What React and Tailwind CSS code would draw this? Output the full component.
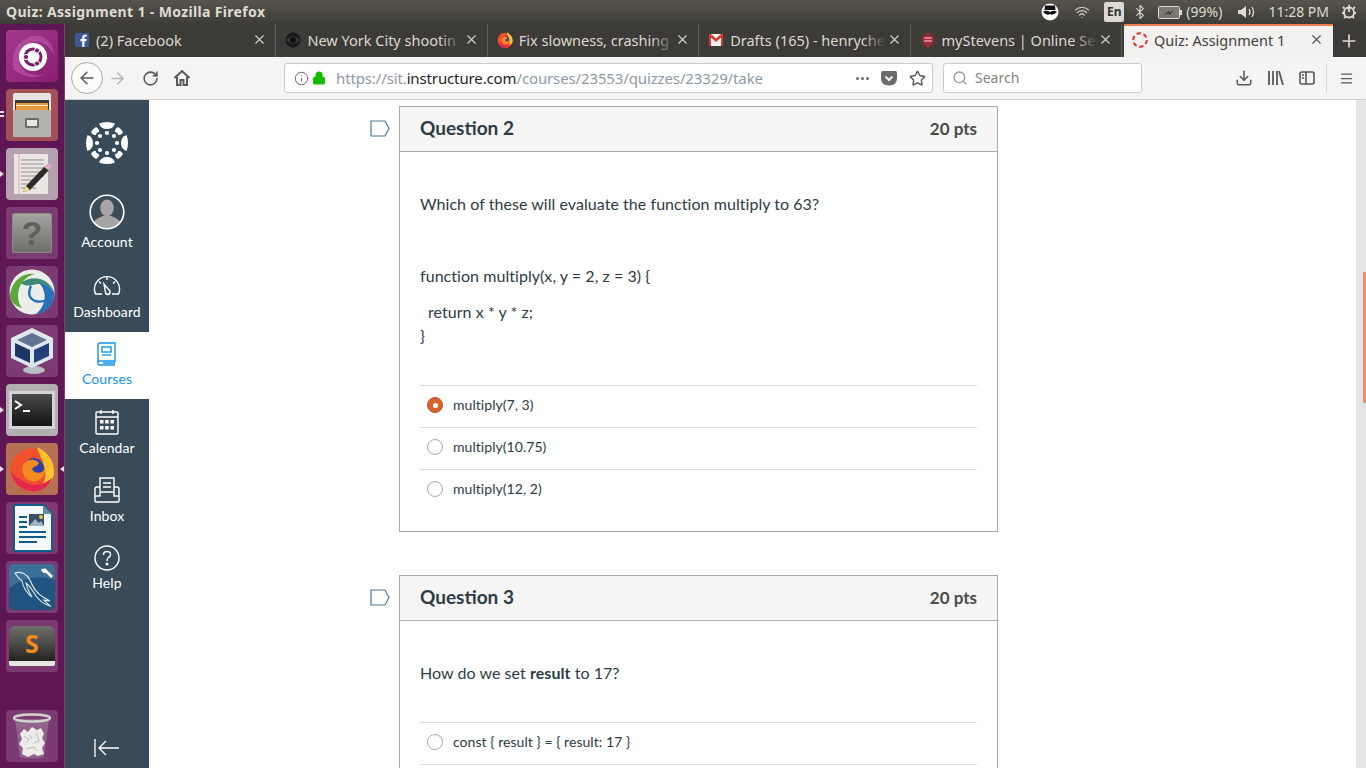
import React from 'react';
import {
  ArrowLeft, ArrowRight, RotateCw, Info, Lock, Star, Search, Download, Menu, X, Plus, Wifi, Bluetooth,
} from 'lucide-react';

// Launcher tiles, drawn by hand since no package has these app icons
const Tile = ({ tone, pip, pipRight, dashes, children }) => (
  <div className={`relative w-[52px] h-[52px] rounded-[4px] flex items-center justify-center shrink-0 ${tone}`}>
    {children}
    {pip && <div className="absolute left-[-6px] top-[23px] w-0 h-0 border-y-[3px] border-y-transparent border-l-[4px] border-l-[#e4dde2]" />}
    {pipRight && <div className="absolute right-[-6px] top-[23px] w-0 h-0 border-y-[3px] border-y-transparent border-r-[4px] border-r-[#e4dde2]" />}
    {dashes && (
      <div className="absolute left-[-6px] top-[22px] flex flex-col gap-[2px]">
        <div className="w-[4px] h-[2px] bg-[#e4dde2]" />
        <div className="w-[4px] h-[2px] bg-[#e4dde2]" />
      </div>
    )}
  </div>
);

const UbuntuLogo = () => (
  <svg width="52" height="52" viewBox="0 0 52 52">
    <path d="M8 40 Q2 14 26 6 Q46 4 48 26 Q44 12 28 12 Q12 16 14 36 Q22 48 40 44 Q24 52 8 40Z" fill="#c76db3" opacity="0.45" />
    <circle cx="27" cy="27" r="14" fill="#fff" />
    <circle cx="27" cy="27" r="8" fill="none" stroke="#77216f" strokeWidth="3" />
    <circle cx="20" cy="27" r="2.6" fill="#77216f" stroke="#fff" />
    <circle cx="31" cy="20.5" r="2.6" fill="#77216f" stroke="#fff" />
    <circle cx="31" cy="33.5" r="2.6" fill="#77216f" stroke="#fff" />
  </svg>
);

const FilesIcon = () => (
  <svg width="44" height="46" viewBox="0 0 44 46">
    <rect x="3" y="1" width="38" height="44" rx="2" fill="#e6e4e0" />
    <rect x="5" y="8" width="34" height="14" fill="#3f3a36" />
    <rect x="6" y="11" width="32" height="10" fill="#e89a3c" />
    <rect x="6" y="13" width="32" height="1" fill="#fff2cf" />
    <rect x="3" y="18" width="38" height="27" rx="1" fill="#b5b3ae" />
    <rect x="15" y="26" width="14" height="10" rx="1" fill="#6e6c68" />
    <rect x="17" y="28" width="10" height="6" fill="#e8e6e2" />
  </svg>
);

const EditorIcon = () => (
  <svg width="44" height="46" viewBox="0 0 44 46">
    <rect x="4" y="3" width="34" height="40" fill="#e9e6e3" />
    <line x1="9" y1="3" x2="9" y2="43" stroke="#e8a9a9" />
    {[9, 13, 17, 21, 25, 29, 33, 37].map((y) => (
      <line key={y} x1="11" y1={y} x2={y > 25 ? 26 : 34} y2={y} stroke="#8f8d8c" />
    ))}
    <path d="M16 35 L35 15 L39 19 L20 39 L13 41 Z" fill="#2e2b2a" />
    <path d="M34 16 L37 13 Q39 12 41 14 Q42 16 40 18 L38.5 19.5 Z" fill="#e8a3c8" />
    <path d="M16 35 L20 39 L13 41 Z" fill="#f2e28f" />
  </svg>
);

const HelpTileIcon = () => (
  <div className="w-10 h-10 rounded-[2px] bg-gradient-to-b from-[#a3a3a0] to-[#6f6f6c] border border-[#8a8a87] flex items-center justify-center font-['Liberation_Sans',sans-serif] font-bold text-[34px] text-[#5f5f5d]">
    ?
  </div>
);

const AnyConnectIcon = () => (
  <svg width="46" height="46" viewBox="0 0 46 46">
    <circle cx="23" cy="23" r="22.5" fill="#eceeec" />
    <path d="M1 27 C2 14 12 3 26 5 C17 7 9 15 9 27 C9 33 11 36 13 39 C6 37 2 33 1 27Z" fill="#5ba73a" />
    <path d="M12 14 C22 6 38 8 45 22 C38 15 30 14 24 16 C20 17 15 17 12 14Z" fill="#3f8a76" />
    <path d="M30 14 C38 22 38 36 27 45 C37 45 46 34 45 23 C42 18 36 15 30 14Z" fill="#2671b8" />
    <path d="M22 17 Q17 28 26 32 Q34 34 40 30" fill="none" stroke="#2671b8" strokeWidth="2.4" />
  </svg>
);

const VirtualBoxIcon = () => (
  <svg width="46" height="48" viewBox="0 0 46 48">
    <ellipse cx="25" cy="43" rx="11" ry="4" fill="#b9bcc2" />
    <path d="M23 1 L44 11 L44 31 L23 41 L2 31 L2 11 Z" fill="#dfe6ee" />
    <path d="M23 6 L38 13 L23 20 L8 13 Z" fill="#64748f" />
    <path d="M6 16 L21 23 L21 36 L6 29 Z" fill="#1f3566" />
    <path d="M40 16 L25 23 L25 36 L40 29 Z" fill="#23407a" />
  </svg>
);

const TerminalIcon = () => (
  <div className="w-[46px] h-[38px] bg-gradient-to-b from-[#4a4a4a] to-[#141414] border-[3px] border-[#d4d4d4] flex items-start pl-[2px] pt-[6px]">
    <svg width="20" height="14" viewBox="0 0 20 14">
      <path d="M1 1 L7 5 L1 9" fill="none" stroke="#fff" strokeWidth="2" />
      <path d="M9 11 L16 11" stroke="#fff" strokeWidth="2" />
    </svg>
  </div>
);

const FirefoxIcon = ({ size = 46 }) => (
  <svg width={size} height={size} viewBox="0 0 46 46">
    <circle cx="23" cy="24" r="21.5" fill="#f2502c" />
    <path d="M28 1 C41 7 46 18 45 28 C43 38 34 45 24 45.5 C35 40 38 32 36 24 C35 16 30 9 28 1Z" fill="#ffc22f" />
    <path d="M2 26 C4 37 14 45.5 25 45.5 C34 45 41 39 43 32 C36 38 26 41 18 37 C10 33 5 30 2 26Z" fill="#e3274d" />
    <circle cx="25" cy="22" r="10" fill="#2f3fa8" />
    <path d="M14 19 C18 13 26 12 30 17 C28 21 25 20 23 23 C26 29 34 27 36 23 C37 31 29 37 22 35 C15 33 12 26 14 19Z" fill="#f58a21" />
  </svg>
);

const WriterIcon = () => (
  <svg width="42" height="48" viewBox="0 0 42 48">
    <path d="M3 1 H32 L41 10 V47 H3 Z" fill="#f5f8fa" stroke="#0f5d8a" strokeWidth="2" />
    <path d="M32 1 L41 10 H32 Z" fill="#5e8eaa" />
    <rect x="8" y="12" width="8" height="2" fill="#0f5d8a" />
    <rect x="8" y="17" width="8" height="2" fill="#0f5d8a" />
    <rect x="8" y="22" width="8" height="2" fill="#0f5d8a" />
    <rect x="18" y="10" width="15" height="12" fill="#38506a" />
    <path d="M18 22 L24 15 L28 19 L30 17 L33 22 Z" fill="#9fb3c6" />
    <circle cx="30" cy="13" r="2" fill="#f0c23a" />
    <rect x="8" y="27" width="27" height="2" fill="#0f5d8a" />
    <rect x="8" y="32" width="27" height="2" fill="#0f5d8a" />
    <rect x="8" y="37" width="18" height="2" fill="#0f5d8a" />
  </svg>
);

const MysqlIcon = () => (
  <svg width="46" height="46" viewBox="0 0 46 46">
    <rect width="46" height="46" rx="5" fill="#1f5580" />
    <path d="M0 5 Q0 0 5 0 H41 Q46 0 46 5 V16 Q22 8 0 24Z" fill="#3a7098" />
    <path d="M6 9 C12 7 18 10 21 16 C24 24 29 30 34 33 L41 37 L35 36 L41 42 C34 40 30 36 27 32 C24 27 21 22 17 19 C18 24 20 28 23 33 C18 29 14 24 13 17 C11 15 8 13 6 9Z" fill="none" stroke="#dfe9f0" strokeWidth="1.1" />
    <path d="M35 5 L43 13 M33 5 Q35 9 38 7" stroke="#fff" strokeWidth="2.6" fill="none" />
  </svg>
);

const SublimeIcon = () => (
  <div className="w-[46px] h-[40px] rounded-t-[6px] rounded-b-[2px] border-b-[5px] border-[#e6e6e2] bg-gradient-to-b from-[#6e6e6b] via-[#4c4c4a] to-[#222221] flex items-center justify-center font-['Noto_Sans',sans-serif] font-bold text-[25px] leading-none text-[#f58a1f]">
    S
  </div>
);

const TrashIcon = () => (
  <svg width="40" height="48" viewBox="0 0 40 48">
    <path d="M3 7 L8 45 Q20 48 32 45 L37 7 Z" fill="#a88aa3" opacity="0.5" />
    <ellipse cx="20" cy="6" rx="18" ry="3.5" fill="none" stroke="#d2d2cf" strokeWidth="2.4" />
    <path d="M8 22 L12 17 L16 20 L20 15 L25 18 L29 16 L32 22 L30 26 L33 31 L30 36 L32 42 L26 44 L22 42 L16 45 L10 42 L11 36 L7 32 L10 27Z" fill="#eeecea" />
    <path d="M12 24 L17 27 L14 31 M24 21 L27 29 L22 31 M14 37 L22 35 L25 39 M18 23 L20 27" fill="none" stroke="#bdbab8" />
  </svg>
);

const Launcher = () => (
  <aside className="w-[65px] shrink-0 bg-[#5f1655] border-r border-[#7d3f74] flex flex-col items-start pl-[6px] pt-[6px] pb-[6px] gap-[7px]">
    <Tile tone="bg-gradient-to-br from-[#a23a8c] to-[#8b1b74]"><UbuntuLogo /></Tile>
    <Tile tone="bg-[#a05258]" dashes><FilesIcon /></Tile>
    <Tile tone="bg-[#b5a2b0]" pip><EditorIcon /></Tile>
    <Tile tone="bg-[#7b3a72]"><HelpTileIcon /></Tile>
    <Tile tone="bg-[#7b3a72]"><AnyConnectIcon /></Tile>
    <Tile tone="bg-[#7b3a72]"><VirtualBoxIcon /></Tile>
    <Tile tone="bg-[#b3aeb0]" pip><TerminalIcon /></Tile>
    <Tile tone="bg-[#b56f52]" pip pipRight><FirefoxIcon /></Tile>
    <Tile tone="bg-[#7b3a72]"><WriterIcon /></Tile>
    <Tile tone="bg-[#7b3a72]"><MysqlIcon /></Tile>
    <Tile tone="bg-[#7b3a72]"><SublimeIcon /></Tile>
    <div className="mt-auto">
      <Tile tone="bg-[#7b3a72]"><TrashIcon /></Tile>
    </div>
  </aside>
);

// Top panel
const TopPanel = () => (
  <div className="h-6 shrink-0 bg-gradient-to-b from-[#57544c] to-[#3d3c37] flex items-center justify-between pl-[6px] font-['Noto_Sans',sans-serif] text-[#dfdbd2]">
    <span className="text-[14px] font-bold leading-none tracking-[0.35px]">Quiz: Assignment 1 - Mozilla Firefox</span>
    <div className="flex items-center text-[14px] leading-none pr-[9px]">
      <svg width="18" height="18" viewBox="0 0 18 18" className="mr-[13px]">
        <circle cx="9" cy="9" r="8.5" fill="#fff" />
        <path d="M4 2.5 H14 L14.5 7 H3.5Z" fill="#111" />
        <path d="M2 9 Q5 6.5 9 9 Q13 6.5 16 9 Q12 13 9 11 Q6 13 2 9Z" fill="#111" />
      </svg>
      <Wifi className="w-[20px] h-[16px] mr-[12px] text-[#c9c6bf]" strokeWidth={2} />
      <div className="w-5 h-5 bg-[#dcd9d2] rounded-[2px] text-[#33322e] text-[12px] font-bold flex items-center justify-center mr-[8px]">En</div>
      <Bluetooth className="w-[16px] h-[16px] mr-[10px] text-[#dfdbd2]" strokeWidth={1.6} />
      <svg width="24" height="13" viewBox="0 0 24 13" className="mr-[4px]">
        <rect x="0.5" y="0.5" width="21" height="12" rx="1" fill="#7a7870" stroke="#dfdbd2" />
        <rect x="22" y="4" width="2" height="5" fill="#dfdbd2" />
        <path d="M6 9 L11 5 L11 7 L16 4 L11 9 L11 7Z" fill="#2c2b28" />
      </svg>
      <span className="mr-[16px]">(99%)</span>
      <svg width="19" height="14" viewBox="0 0 19 14" className="mr-[11px]">
        <path d="M0 5 H3 L8 1 V13 L3 9 H0Z" fill="#dfdbd2" />
        <path d="M11 4 Q13 7 11 10 M14 2 Q17 7 14 12" fill="none" stroke="#dfdbd2" strokeWidth="1.3" />
      </svg>
      <span className="mr-[12px]">11:28 PM</span>
      <svg width="16" height="16" viewBox="0 0 16 16">
        <path d="M8 1 V8" stroke="#dfdbd2" strokeWidth="1.8" />
        <circle cx="8" cy="8.5" r="5" fill="none" stroke="#dfdbd2" strokeWidth="1.8" />
        <path d="M2 3 L3.5 4.5 M14 3 L12.5 4.5 M1 9 H3 M13 9 H15 M3 14 L4.5 12.5 M13 14 L11.5 12.5" stroke="#dfdbd2" strokeWidth="1.8" />
      </svg>
    </div>
  </div>
);

// Favicons
const FacebookFav = () => (
  <svg width="14" height="14" viewBox="0 0 14 14">
    <rect width="14" height="14" rx="1" fill="#3b5998" />
    <path d="M9.5 14 V8.2 H11.4 L11.7 6 H9.5 V4.6 Q9.5 3.6 10.6 3.6 H11.8 V1.7 H10 Q7.2 1.7 7.2 4.4 V6 H5.4 V8.2 H7.2 V14Z" fill="#fff" />
  </svg>
);

const CbsFav = () => (
  <svg width="16" height="16" viewBox="0 0 16 16">
    <circle cx="8" cy="8" r="7.5" fill="#1a1a1a" />
    <path d="M1 8 Q8 1 15 8 Q8 15 1 8Z" fill="#3a3a38" />
    <circle cx="8" cy="8" r="3" fill="#111" />
  </svg>
);

const GmailFav = () => (
  <svg width="14" height="12" viewBox="0 0 14 12">
    <rect width="14" height="12" fill="#f2f2f2" />
    <path d="M0 0 H2 L7 4.5 L12 0 H14 V12 H12 V3.5 L7 8 L2 3.5 V12 H0Z" fill="#d33c30" />
  </svg>
);

const StevensFav = () => (
  <svg width="14" height="16" viewBox="0 0 14 16">
    <path d="M7 0 L9 3 L13 5 L12 11 L7 16 L2 11 L1 5 L5 3Z" fill="#a32638" />
    <path d="M3 6 H11 M3 9 H11" stroke="#f0d5da" strokeWidth="1.2" />
  </svg>
);

const SpinnerFav = () => (
  <svg width="16" height="16" viewBox="0 0 16 16">
    <circle cx="8" cy="8" r="6.8" fill="none" stroke="#e0322b" strokeWidth="2" strokeDasharray="4.4 2.7" />
  </svg>
);

const tabs = [
  { title: '(2) Facebook', icon: <FacebookFav /> },
  { title: 'New York City shootin', icon: <CbsFav />, fade: true },
  { title: 'Fix slowness, crashing', icon: <FirefoxIcon size={16} />, fade: true },
  { title: 'Drafts (165) - henryche', icon: <GmailFav />, fade: true },
  { title: 'myStevens | Online Se', icon: <StevensFav />, fade: true },
];

const Tab = ({ tab }) => (
  <div className="w-[211.4px] h-full shrink-0 flex items-center pl-[9px] pr-[8px] pb-[2px] border-r border-[#5f5e59]">
    <div className="w-4 h-4 flex items-center justify-center shrink-0">{tab.icon}</div>
    <div className="relative ml-[6px] w-[156px] overflow-hidden whitespace-nowrap text-[14.5px] leading-5 text-[#dcd8d0]">
      {tab.title}
      {tab.fade && <div className="absolute right-0 top-0 h-full w-6 bg-gradient-to-r from-transparent to-[#3c3b37]" />}
    </div>
    <X className="ml-auto w-[15px] h-[15px] text-[#d6d3cc]" strokeWidth={1.8} />
  </div>
);

const TabStrip = () => (
  <div className="h-[33px] shrink-0 bg-[#3c3b37] flex items-stretch font-['Noto_Sans',sans-serif]">
    {tabs.map((tab) => <Tab key={tab.title} tab={tab} />)}
    <div className="ml-[2px] w-[209px] shrink-0 bg-[#f2f1ef] border-t-2 border-[#ef7b51] flex items-center pl-[8px] pr-[9px] pb-[4px]">
      <SpinnerFav />
      <span className="ml-[6px] text-[14.5px] leading-5 text-[#3f3e3a] whitespace-nowrap">Quiz: Assignment 1</span>
      <X className="ml-auto w-[15px] h-[15px] text-[#55534f]" strokeWidth={1.8} />
    </div>
    <div className="flex-1 flex items-center justify-center">
      <Plus className="w-[20px] h-[20px] text-[#dcd8d0]" strokeWidth={2} />
    </div>
  </div>
);

const HomeGlyph = () => (
  <svg width="18" height="18" viewBox="0 0 18 18" fill="none" stroke="#585754" strokeWidth="2">
    <path d="M1.5 9 L9 2 L16.5 9" />
    <path d="M4 8 V16 H7.5 V11 H10.5 V16 H14 V8" />
  </svg>
);

const PocketGlyph = () => (
  <svg width="16" height="15" viewBox="0 0 16 15">
    <path d="M1.5 0 H14.5 Q16 0 16 1.5 V7 Q16 14.5 8 14.5 Q0 14.5 0 7 V1.5 Q0 0 1.5 0Z" fill="#6b6a67" />
    <path d="M4.5 5.5 L8 9 L11.5 5.5" fill="none" stroke="#f2f1ef" strokeWidth="2" />
  </svg>
);

const Toolbar = () => (
  <div className="h-[43px] shrink-0 bg-[#f5f4f2] border-b border-[#cfcecb] flex items-center font-['Noto_Sans',sans-serif] text-[#585754]">
    <div className="ml-[6px] w-8 h-8 rounded-full bg-[#fbfbfa] border border-[#a9a8a5] flex items-center justify-center">
      <ArrowLeft className="w-5 h-5" strokeWidth={1.8} />
    </div>
    <ArrowRight className="ml-[5px] w-[19px] h-[19px] text-[#b9b8b5]" strokeWidth={1.8} />
    <RotateCw className="ml-[15px] w-[17px] h-[17px]" strokeWidth={2.2} />
    <div className="ml-[14px]"><HomeGlyph /></div>

    <div className="ml-[93px] w-[649px] h-[30px] bg-white border border-[#cccbc8] rounded-[3px] flex items-center pl-[9px] pr-[6px]">
      <Info className="w-[15px] h-[15px] text-[#6b6a67]" strokeWidth={1.6} />
      <Lock className="ml-[3px] w-[14px] h-[14px] text-[#12bc00]" fill="#12bc00" strokeWidth={2.4} />
      <span className="ml-[10px] text-[15px] tracking-[-0.13px] leading-5 whitespace-nowrap text-[#8f9aa5]">
        https://sit.<span className="text-[#1c1f26]">instructure.com</span>/courses/23553/quizzes/23329/take
      </span>
      <span className="ml-auto flex gap-[2px] mr-[12px]">
        <i className="w-[3px] h-[3px] rounded-full bg-[#6b6a67]" />
        <i className="w-[3px] h-[3px] rounded-full bg-[#6b6a67]" />
        <i className="w-[3px] h-[3px] rounded-full bg-[#6b6a67]" />
      </span>
      <PocketGlyph />
      <Star className="ml-[12px] w-[17px] h-[17px]" strokeWidth={2} />
    </div>

    <div className="ml-[10px] w-[199px] h-[30px] bg-white border border-[#cccbc8] rounded-[3px] flex items-center pl-[8px]">
      <Search className="w-[16px] h-[16px] text-[#9a9997]" strokeWidth={2} />
      <span className="ml-[7px] text-[14px] leading-5 text-[#85847f]">Search</span>
    </div>

    <Download className="ml-[93px] w-[18px] h-[18px]" strokeWidth={2} />
    <svg width="16" height="14" viewBox="0 0 16 14" fill="none" stroke="#585754" strokeWidth="1.8" className="ml-[15px]">
      <path d="M1 0 V14 M5 0 V14 M9 0 V14 M11 0 L15 14" />
    </svg>
    <svg width="16" height="14" viewBox="0 0 16 14" fill="none" stroke="#585754" strokeWidth="1.6" className="ml-[15px]">
      <rect x="1" y="1" width="14" height="12" rx="2" />
      <path d="M7 1 V13" />
      <path d="M3 4 H5 M3 7 H5" />
    </svg>
    <div className="ml-[11px] w-px h-[28px] bg-[#d5d4d1]" />
    <Menu className="ml-[12px] w-[15px] h-[15px]" strokeWidth={2} />
  </div>
);

// Canvas sidebar
const CanvasLogo = () => (
  <svg width="44" height="44" viewBox="0 0 44 44" fill="#fff">
    <path d="M14 2.5 Q22 -0.5 30 2.5 Q28 8 22 8 Q16 8 14 2.5Z" />
    <path d="M14 41.5 Q22 44.5 30 41.5 Q28 36 22 36 Q16 36 14 41.5Z" />
    <path d="M2.5 14 Q-0.5 22 2.5 30 Q8 28 8 22 Q8 16 2.5 14Z" />
    <path d="M41.5 14 Q44.5 22 41.5 30 Q36 28 36 22 Q36 16 41.5 14Z" />
    <path d="M6 11 Q8 7.5 11 6 Q14.5 8 14 11 Q11 11.5 11 14 Q7.5 14.5 6 11Z" />
    <path d="M38 11 Q36 7.5 33 6 Q29.5 8 30 11 Q33 11.5 33 14 Q36.5 14.5 38 11Z" />
    <path d="M6 33 Q8 36.5 11 38 Q14.5 36 14 33 Q11 32.5 11 30 Q7.5 29.5 6 33Z" />
    <path d="M38 33 Q36 36.5 33 38 Q29.5 36 30 33 Q33 32.5 33 30 Q36.5 29.5 38 33Z" />
    <circle cx="22" cy="12" r="2.1" />
    <circle cx="22" cy="32" r="2.1" />
    <circle cx="12" cy="22" r="2.1" />
    <circle cx="32" cy="22" r="2.1" />
    <circle cx="15" cy="15" r="2.1" />
    <circle cx="29" cy="15" r="2.1" />
    <circle cx="15" cy="29" r="2.1" />
    <circle cx="29" cy="29" r="2.1" />
  </svg>
);

const AccountGlyph = () => (
  <svg width="36" height="36" viewBox="0 0 36 36">
    <defs>
      <clipPath id="acct"><circle cx="18" cy="18" r="16.5" /></clipPath>
    </defs>
    <circle cx="18" cy="18" r="16.5" fill="#3c4b58" />
    <g clipPath="url(#acct)" fill="#a5a5a5">
      <ellipse cx="18" cy="14" rx="6.8" ry="8.5" />
      <path d="M2 36 Q3 25 14 22 H22 Q33 25 34 36Z" />
    </g>
    <circle cx="18" cy="18" r="16.8" fill="none" stroke="#fff" strokeWidth="1.6" />
  </svg>
);

const DashboardGlyph = () => (
  <svg width="28" height="24" viewBox="0 0 28 24" fill="none" stroke="#fff" strokeWidth="1.4">
    <path d="M9 20 H2.5 A 12.5 12.5 0 1 1 25.5 20 H19" />
    <path d="M11 10 L17 17 Q17.5 20 15 20.5 Q12.5 20.5 12.5 18Z" />
    <path d="M14 3 V6 M6 7.5 L8 9.5 M22 7.5 L20 9.5" />
  </svg>
);

const CoursesGlyph = () => (
  <svg width="20" height="24" viewBox="0 0 20 24" fill="none" stroke="#1492e6" strokeWidth="1.4">
    <path d="M3 1 H18 V19 H3 Q1 19 1 21 V3 Q1 1 3 1Z" />
    <path d="M1 21 Q1 23 3 23 H18 M6 21 H18" />
    <rect x="5" y="5" width="9" height="5" />
    <path d="M5 13 H14" />
  </svg>
);

const CalendarGlyph = () => (
  <svg width="24" height="26" viewBox="0 0 24 26" fill="none" stroke="#fff" strokeWidth="1.4">
    <rect x="1" y="3" width="22" height="22" rx="1" />
    <path d="M1 8 H23 M6 1 V5 M18 1 V5" />
    <g fill="#fff" stroke="none">
      <rect x="5" y="11" width="3.5" height="3.5" />
      <rect x="10.2" y="11" width="3.5" height="3.5" />
      <rect x="15.5" y="11" width="3.5" height="3.5" />
      <rect x="5" y="17" width="3.5" height="3.5" />
      <rect x="10.2" y="17" width="3.5" height="3.5" />
      <rect x="15.5" y="17" width="3.5" height="3.5" />
    </g>
  </svg>
);

const InboxGlyph = () => (
  <svg width="26" height="26" viewBox="0 0 26 26" fill="none" stroke="#fff" strokeWidth="1.4">
    <path d="M6 14 V1 H20 V14" />
    <path d="M9 6 H17 M9 10 H17" />
    <path d="M6 10 H3 Q1 10 1 12 V24 Q1 25 2 25 H24 Q25 25 25 24 V12 Q25 10 23 10 H20" />
    <path d="M1 19 H6 V15 H20 V19 H25" />
  </svg>
);

const HelpGlyph = () => (
  <svg width="26" height="26" viewBox="0 0 26 26" fill="none" stroke="#fff" strokeWidth="1.4">
    <circle cx="13" cy="13" r="12" />
    <path d="M9.5 10 Q9.5 6.5 13 6.5 Q16.5 6.5 16.5 9.5 Q16.5 11.5 14.5 12.5 Q13 13.5 13 16" />
    <circle cx="13" cy="19" r="0.8" fill="#fff" />
  </svg>
);

const NavItem = ({ label, icon, itemClass, iconClass, labelClass, active }) => (
  <div className={`flex flex-col items-center shrink-0 ${itemClass} ${active ? 'bg-white' : ''}`}>
    <div className={`flex items-center justify-center ${iconClass}`}>{icon}</div>
    <span className={`text-[14px] leading-5 tracking-[0.1px] ${labelClass} ${active ? 'text-[#1492e6]' : 'text-white'}`}>{label}</span>
  </div>
);

const Sidebar = () => (
  <nav className="w-[84px] shrink-0 bg-[#394b58] flex flex-col font-['Lato',sans-serif]">
    <div className="h-[86px] shrink-0 flex items-center justify-center"><CanvasLogo /></div>
    <NavItem label="Account" icon={<AccountGlyph />} itemClass="h-[76px] pt-2" iconClass="h-9" labelClass="mt-[2px]" />
    <NavItem label="Dashboard" icon={<DashboardGlyph />} itemClass="h-[70px] pt-[11px]" iconClass="h-[26px]" labelClass="mt-[3px]" />
    <NavItem label="Courses" icon={<CoursesGlyph />} itemClass="h-[67px] pt-[9px]" iconClass="h-[26px]" labelClass="mt-[2px]" active />
    <NavItem label="Calendar" icon={<CalendarGlyph />} itemClass="h-[68px] pt-[10px]" iconClass="h-[26px]" labelClass="mt-[3px]" />
    <NavItem label="Inbox" icon={<InboxGlyph />} itemClass="h-[68px] pt-[10px]" iconClass="h-[26px]" labelClass="mt-[3px]" />
    <NavItem label="Help" icon={<HelpGlyph />} itemClass="h-[68px] pt-[10px]" iconClass="h-[26px]" labelClass="mt-[2px]" />
    <div className="mt-auto h-[30px] flex items-start justify-center">
      <svg width="26" height="20" viewBox="0 0 26 20" fill="none" stroke="#fff" strokeWidth="1.3">
        <path d="M1 1 V19 M25 10 H5 M12 3 L5 10 L12 17" />
      </svg>
    </div>
  </nav>
);

// Quiz cards
const Radio = ({ checked }) => checked ? (
  <div className="w-4 h-4 rounded-full bg-[#d9622f] border border-[#b5552f] flex items-center justify-center shrink-0">
    <div className="w-[5px] h-[5px] rounded-full bg-white" />
  </div>
) : (
  <div className="w-4 h-4 rounded-full bg-white border border-[#a8a8a8] shrink-0" />
);

const Option = ({ text, checked }) => (
  <div className="h-[42px] border-t border-[#dddddd] flex items-center pl-[7px] pb-[3px]">
    <Radio checked={checked} />
    <span className="ml-[10px] text-[14px] text-[#2d3b45]">{text}</span>
  </div>
);

const Question = ({ title, children }) => (
  <div className="flex items-start shrink-0">
    <svg width="20" height="17" viewBox="0 0 20 17" fill="none" stroke="#4a7a96" strokeWidth="1.2" className="mt-[14px] mr-[9px]">
      <path d="M1 1 H15 L19 8.5 L15 16 H1Z" />
    </svg>
    <section className="w-[599px] border border-[#aaaaaa] bg-white">
      <header className="h-[45px] bg-[#f5f5f5] border-b border-[#aaaaaa] flex items-center justify-between px-5">
        <h2 className="text-[19px] font-bold text-[#2d3b45] -mt-[2px]">{title}</h2>
        <span className="text-[17px] font-bold text-[#4a4a4a]">20 pts</span>
      </header>
      {children}
    </section>
  </div>
);

const QuizPane = () => (
  <main className="flex-1 bg-white overflow-hidden pl-[221px] pt-[6px] flex flex-col gap-[43px] font-['Lato',sans-serif] text-[#2d3b45]">
    <Question title="Question 2">
      <div className="px-5 pb-5 text-[16px] leading-6 tracking-[0.05px]">
        <p className="mt-10">Which of these will evaluate the function multiply to 63?</p>
        <p className="mt-12">function multiply(x, y = 2, z = 3) {'{'}</p>
        <p className="mt-3 pl-2">return x * y * z;</p>
        <p>{'}'}</p>
        <div className="mt-[37px]">
          <Option text="multiply(7, 3)" checked />
          <Option text="multiply(10.75)" />
          <Option text="multiply(12, 2)" />
        </div>
      </div>
    </Question>
    <Question title="Question 3">
      <div className="px-5 pb-5 text-[16px] leading-6 tracking-[0.05px]">
        <p className="mt-10">How do we set <b>result</b> to 17?</p>
        <div className="mt-[37px]">
          <Option text="const { result } = { result: 17 }" />
          <Option text="" />
        </div>
      </div>
    </Question>
  </main>
);

export default function App() {
  return (
    <div className="w-[1366px] h-[768px] overflow-hidden flex flex-col">
      <TopPanel />
      <div className="flex-1 min-h-0 flex">
        <Launcher />
        <div className="flex-1 min-w-0 flex flex-col">
          <TabStrip />
          <Toolbar />
          <div className="flex-1 min-h-0 flex">
            <Sidebar />
            <QuizPane />
            <div className="w-[10px] shrink-0 bg-[#e5e5e5] flex justify-end">
              <div className="w-[3px] h-[131px] mt-[172px] bg-[#ef8a66]" />
            </div>
          </div>
        </div>
      </div>
    </div>
  );
}
